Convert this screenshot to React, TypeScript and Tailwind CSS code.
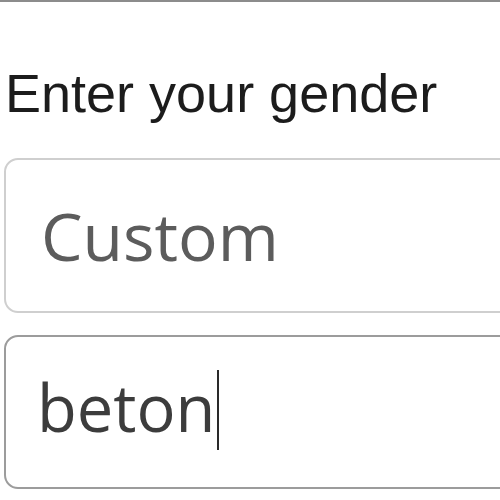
export default function App() {
  return (
    <div className="h-[500px] w-[500px] overflow-hidden border-t-2 border-[#8c8c8c] bg-white">
      <div
        className="ml-[5px] mt-[64px] whitespace-nowrap text-[54px] leading-none text-[#1c1c1c]"
        style={{ fontFamily: '"Liberation Sans", Arial, sans-serif' }}
      >
        Enter your gender
      </div>

      <div
        className="ml-[4px] mt-[38px] flex flex-col gap-[22px]"
        style={{ fontFamily: '"Open Sans", "Noto Sans", sans-serif' }}
      >
        <div className="flex h-[155px] w-[560px] items-center rounded-[14px] border-2 border-[#cfcfcf] pb-[2px] pl-[35px]">
          <span className="text-[66px] leading-none text-[#5c5c5c]">Custom</span>
        </div>

        <div className="flex h-[154px] w-[560px] items-center rounded-[14px] border-2 border-[#9c9c9c] pb-[4px] pl-[31px]">
          <span className="mb-[6px] text-[65px] leading-none text-[#3c3c3c]">beton</span>
          <span className="ml-[2px] inline-block h-[80px] w-[2px] bg-[#2a2a2a]" />
        </div>
      </div>
    </div>
  );
}
